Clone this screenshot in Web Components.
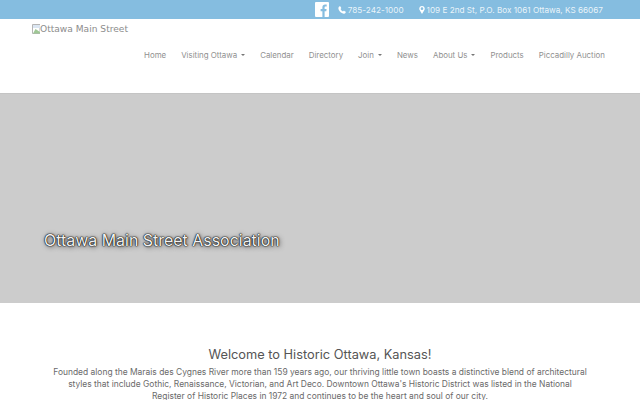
<!DOCTYPE html>
<html>
<head>
<meta charset="utf-8">
<title>Ottawa Main Street</title>
<style>
  html, body { margin: 0; padding: 0; background: #fff; }
  body { height: 400px; overflow: hidden; font-family: Inter, "Liberation Sans", sans-serif; }
</style>
</head>
<body>
<top-bar></top-bar>
<site-header></site-header>
<hero-banner>Ottawa Main Street Association</hero-banner>
<welcome-block heading="Welcome to Historic Ottawa, Kansas!">
  Founded along the Marais des Cygnes River more than 159 years ago, our thriving little town boasts a distinctive blend of architectural<br>
  styles that include Gothic, Renaissance, Victorian, and Art Deco. Downtown Ottawa's Historic District was listed in the National<br>
  Register of Historic Places in 1972 and continues to be the heart and soul of our city.
</welcome-block>

<script>
class TopBar extends HTMLElement {
  constructor() {
    super();
    this.attachShadow({ mode: "open" });
    this.shadowRoot.innerHTML = `
      <style>
        :host {
          display: flex;
          justify-content: flex-end;
          align-items: center;
          height: 19px;
          padding-right: 37px;
          background: #85bde0;
          color: rgba(255, 255, 255, 0.85);
          font-size: 8.2px;
        }
        .fb { width: 14px; height: 15px; margin-right: 9px; display: block; }
        .item { display: flex; align-items: center; white-space: nowrap; }
        .item + .item { margin-left: 15px; }
        .item svg { height: 8px; margin-right: 2px; display: block; }
      </style>
      <svg class="fb" viewBox="0 0 14 15">
        <rect width="14" height="15" rx="1" fill="#fff"/>
        <path fill="#85bde0" d="M9.600 15V9.200h1.700l.3-2.200h-2V5.600c0-.6.2-1 1-1h1.100V2.600c-.2 0-.8-.1-1.600-.1-1.600 0-2.700 1-2.700 2.800V7H5.600v2.200h1.800V15z"/>
      </svg>
      <span class="item">
        <svg style="width:8px" viewBox="0 0 16 16"><path fill="#fff" d="M15.500 11.800c0 .4-.2 1.200-.4 1.600-.2.600-1 1-1.700 1.400-.6.300-1.200.5-1.900.5-1 0-1.900-.4-2.800-.8-.6-.2-1.200-.5-1.700-.9C5.300 12.800 3.200 10.700 2.400 9c-.3-.5-.6-1.100-.9-1.700C1.100 6.500.8 5.500.8 4.600c0-.7.200-1.300.5-1.900.3-.7.800-1.400 1.300-1.700.4-.2 1.200-.4 1.600-.4h.3c.2.100.4.500.5.700l.7 1.300.6 1c.1.200.3.400.3.600 0 .3-.3.600-.6.900-.3.300-.9.700-.9 1.100 0 .2.100.4.200.5.400.8 1.100 1.700 1.700 2.300.6.600 1.500 1.300 2.300 1.700.1.100.3.200.5.200.4 0 .8-.6 1.100-.9.300-.3.600-.6.900-.6.200 0 .4.200.6.300l1 .6 1.300.7c.2.100.6.300.7.500z"/></svg>785-242-1000
      </span>
      <span class="item">
        <svg style="width:6px;margin-right:2px" viewBox="2.500 0 11 16"><path fill="#fff" fill-rule="evenodd" d="M8 0C4.700 0 2.500 2.400 2.500 5.400c0 1 .3 1.800.7 2.600L8 16l4.800-8c.4-.8.7-1.600.7-2.600C13.500 2.400 11.300 0 8 0zm0 8a2.700 2.700 0 1 1 0-5.400A2.700 2.700 0 0 1 8 8z"/></svg>109 E 2nd St, P.O. Box 1061 Ottawa, KS 66067
      </span>
    `;
  }
}

class NavItem extends HTMLElement {
  constructor() {
    super();
    this.attachShadow({ mode: "open" });
    this.shadowRoot.innerHTML = `
      <style>
        :host { display: inline-flex; align-items: center; white-space: nowrap; }
        .caret {
          display: none;
          width: 0; height: 0;
          margin-left: 4px;
          border-top: 2px solid #777;
          border-left: 2px solid transparent;
          border-right: 2px solid transparent;
        }
        :host([menu]) .caret { display: block; }
      </style>
      <slot></slot><span class="caret"></span>
    `;
  }
}

class SiteHeader extends HTMLElement {
  constructor() {
    super();
    this.attachShadow({ mode: "open" });
    this.shadowRoot.innerHTML = `
      <style>
        :host {
          display: block;
          height: 74px;
          box-sizing: border-box;
          padding: 3px 35px 0 32px;
          background: #fff;
        }
        .logo {
          display: flex;
          height: 14px;
          align-items: center;
          font: 9.1px "DejaVu Sans", sans-serif;
          color: #8c8c8c;
        }
        .logo svg { width: 8px; height: 10px; display: block; }
        nav {
          display: flex;
          justify-content: flex-end;
          gap: 15px;
          margin-top: 13px;
          color: #909090;
          font-size: 7.9px;
          line-height: 12px;
        }
      </style>
      <div class="logo">
        <svg viewBox="0 0 8 10">
          <path fill="#fff" stroke="#b5b5b5" d="M.5.5h7.500v9H.5z"/>
          <path fill="#9fc795" d="M1 9.500l2.500-4.500 4.500 3v1.500z"/>
          <path fill="#dbe6f2" d="M1 1h7v3H1z"/>
        </svg>
        Ottawa Main Street
      </div>
      <nav>
        <nav-item>Home</nav-item>
        <nav-item menu>Visiting Ottawa</nav-item>
        <nav-item>Calendar</nav-item>
        <nav-item>Directory</nav-item>
        <nav-item menu>Join</nav-item>
        <nav-item>News</nav-item>
        <nav-item menu>About Us</nav-item>
        <nav-item>Products</nav-item>
        <nav-item>Piccadilly Auction</nav-item>
      </nav>
    `;
  }
}

class HeroBanner extends HTMLElement {
  constructor() {
    super();
    this.attachShadow({ mode: "open" });
    this.shadowRoot.innerHTML = `
      <style>
        :host {
          display: flex;
          align-items: flex-end;
          height: 210px;
          box-sizing: border-box;
          padding: 0 0 52px 44px;
          background: #ccc;
          border-top: 1px solid #c4c4c4;
          color: #f2f2f2;
          font-size: 15.95px;
          line-height: 20px;
          text-shadow: 0 0 1px #000, 0 0 1px #000, 0 0 2px #333, 1px 1px 5px rgba(0,0,0,.7);
        }
      </style>
      <slot></slot>
    `;
  }
}

class WelcomeBlock extends HTMLElement {
  constructor() {
    super();
    this.attachShadow({ mode: "open" });
    this.shadowRoot.innerHTML = `
      <style>
        :host {
          display: block;
          padding-top: 43px;
          text-align: center;
          color: #6a6a6a;
          font-size: 8.45px;
          line-height: 12px;
        }
        h2 {
          margin: 0 0 3px;
          font-size: 12.8px;
          font-weight: 400;
          line-height: 17px;
          color: #555;
        }
      </style>
      <h2></h2>
      <slot></slot>
    `;
    this.shadowRoot.querySelector("h2").textContent = this.getAttribute("heading");
  }
}

customElements.define("top-bar", TopBar);
customElements.define("nav-item", NavItem);
customElements.define("site-header", SiteHeader);
customElements.define("hero-banner", HeroBanner);
customElements.define("welcome-block", WelcomeBlock);
</script>
</body>
</html>
